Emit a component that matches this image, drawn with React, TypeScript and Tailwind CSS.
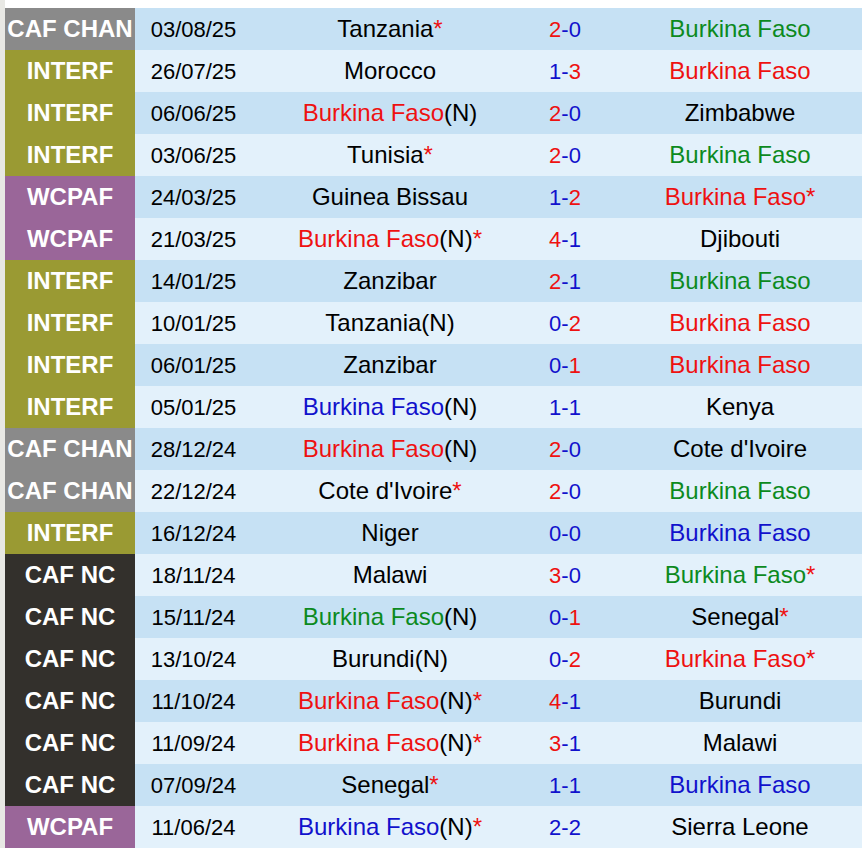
import React from "react";

type Comp = "CHAN" | "INTERF" | "WCPAF" | "NC";
type C = "r" | "g" | "b" | "k";
interface Row {
  comp: Comp;
  date: string;
  home: string;
  hc: C;
  hn?: boolean;
  hs?: boolean;
  hg: number;
  ag: number;
  away: string;
  ac: C;
  as?: boolean;
}

const rows: Row[] = [
  { comp: "CHAN", date: "03/08/25", home: "Tanzania", hc: "k", hs: true, hg: 2, ag: 0, away: "Burkina Faso", ac: "g" },
  { comp: "INTERF", date: "26/07/25", home: "Morocco", hc: "k", hg: 1, ag: 3, away: "Burkina Faso", ac: "r" },
  { comp: "INTERF", date: "06/06/25", home: "Burkina Faso", hc: "r", hn: true, hg: 2, ag: 0, away: "Zimbabwe", ac: "k" },
  { comp: "INTERF", date: "03/06/25", home: "Tunisia", hc: "k", hs: true, hg: 2, ag: 0, away: "Burkina Faso", ac: "g" },
  { comp: "WCPAF", date: "24/03/25", home: "Guinea Bissau", hc: "k", hg: 1, ag: 2, away: "Burkina Faso", ac: "r", as: true },
  { comp: "WCPAF", date: "21/03/25", home: "Burkina Faso", hc: "r", hn: true, hs: true, hg: 4, ag: 1, away: "Djibouti", ac: "k" },
  { comp: "INTERF", date: "14/01/25", home: "Zanzibar", hc: "k", hg: 2, ag: 1, away: "Burkina Faso", ac: "g" },
  { comp: "INTERF", date: "10/01/25", home: "Tanzania(N)", hc: "k", hg: 0, ag: 2, away: "Burkina Faso", ac: "r" },
  { comp: "INTERF", date: "06/01/25", home: "Zanzibar", hc: "k", hg: 0, ag: 1, away: "Burkina Faso", ac: "r" },
  { comp: "INTERF", date: "05/01/25", home: "Burkina Faso", hc: "b", hn: true, hg: 1, ag: 1, away: "Kenya", ac: "k" },
  { comp: "CHAN", date: "28/12/24", home: "Burkina Faso", hc: "r", hn: true, hg: 2, ag: 0, away: "Cote d'Ivoire", ac: "k" },
  { comp: "CHAN", date: "22/12/24", home: "Cote d'Ivoire", hc: "k", hs: true, hg: 2, ag: 0, away: "Burkina Faso", ac: "g" },
  { comp: "INTERF", date: "16/12/24", home: "Niger", hc: "k", hg: 0, ag: 0, away: "Burkina Faso", ac: "b" },
  { comp: "NC", date: "18/11/24", home: "Malawi", hc: "k", hg: 3, ag: 0, away: "Burkina Faso", ac: "g", as: true },
  { comp: "NC", date: "15/11/24", home: "Burkina Faso", hc: "g", hn: true, hg: 0, ag: 1, away: "Senegal", ac: "k", as: true },
  { comp: "NC", date: "13/10/24", home: "Burundi(N)", hc: "k", hg: 0, ag: 2, away: "Burkina Faso", ac: "r", as: true },
  { comp: "NC", date: "11/10/24", home: "Burkina Faso", hc: "r", hn: true, hs: true, hg: 4, ag: 1, away: "Burundi", ac: "k" },
  { comp: "NC", date: "11/09/24", home: "Burkina Faso", hc: "r", hn: true, hs: true, hg: 3, ag: 1, away: "Malawi", ac: "k" },
  { comp: "NC", date: "07/09/24", home: "Senegal", hc: "k", hs: true, hg: 1, ag: 1, away: "Burkina Faso", ac: "b" },
  { comp: "WCPAF", date: "11/06/24", home: "Burkina Faso", hc: "b", hn: true, hs: true, hg: 2, ag: 2, away: "Sierra Leone", ac: "k" },
];

const compLabel: Record<Comp, string> = {
  CHAN: "CAF CHAN",
  INTERF: "INTERF",
  WCPAF: "WCPAF",
  NC: "CAF NC",
};

const compBg: Record<Comp, string> = {
  CHAN: "bg-[#8a8a8a]",
  INTERF: "bg-[#9a9a33]",
  WCPAF: "bg-[#9a6699]",
  NC: "bg-[#33302c]",
};

const colorCls: Record<C, string> = {
  r: "text-[#ee1111]",
  g: "text-[#0c8a1e]",
  b: "text-[#1111cc]",
  k: "text-black",
};

function Star() {
  return <span className="text-[#ee1111]">*</span>;
}

function Score({ hg, ag }: { hg: number; ag: number }) {
  const red = "text-[#ee1111]";
  const blue = "text-[#1111cc]";
  return (
    <span>
      <span className={hg > ag ? red : blue}>{hg}</span>
      <span className={blue}>-</span>
      <span className={ag > hg ? red : blue}>{ag}</span>
    </span>
  );
}

export default function App() {
  return (
    <div className="flex h-[848px] w-[862px] overflow-hidden bg-white font-['Liberation_Sans',Arial,sans-serif]">
      <div className="w-[5px] shrink-0 bg-[#e8e8e4]" />
      <div className="flex flex-col pt-[8px]">
        {rows.map((r, i) => (
          <div
            key={i}
            className={`flex h-[42px] shrink-0 items-center text-[22px] ${
              i % 2 === 0 ? "bg-[#c6e1f4]" : "bg-[#e3f1fb]"
            }`}
          >
            <div
              className={`flex h-full w-[130px] shrink-0 items-center justify-center text-[24px] font-bold text-white ${compBg[r.comp]}`}
            >
              {compLabel[r.comp]}
            </div>
            <div className="w-[117px] shrink-0 text-center text-black">{r.date}</div>
            <div className="w-[276px] shrink-0 text-center text-[24px]">
              <span className={colorCls[r.hc]}>{r.home}</span>
              {r.hn && <span className="text-black">(N)</span>}
              {r.hs && <Star />}
            </div>
            <div className="w-[74px] shrink-0 text-center">
              <Score hg={r.hg} ag={r.ag} />
            </div>
            <div className="w-[276px] shrink-0 text-center text-[24px]">
              <span className={colorCls[r.ac]}>{r.away}</span>
              {r.as && <Star />}
            </div>
          </div>
        ))}
      </div>
    </div>
  );
}
